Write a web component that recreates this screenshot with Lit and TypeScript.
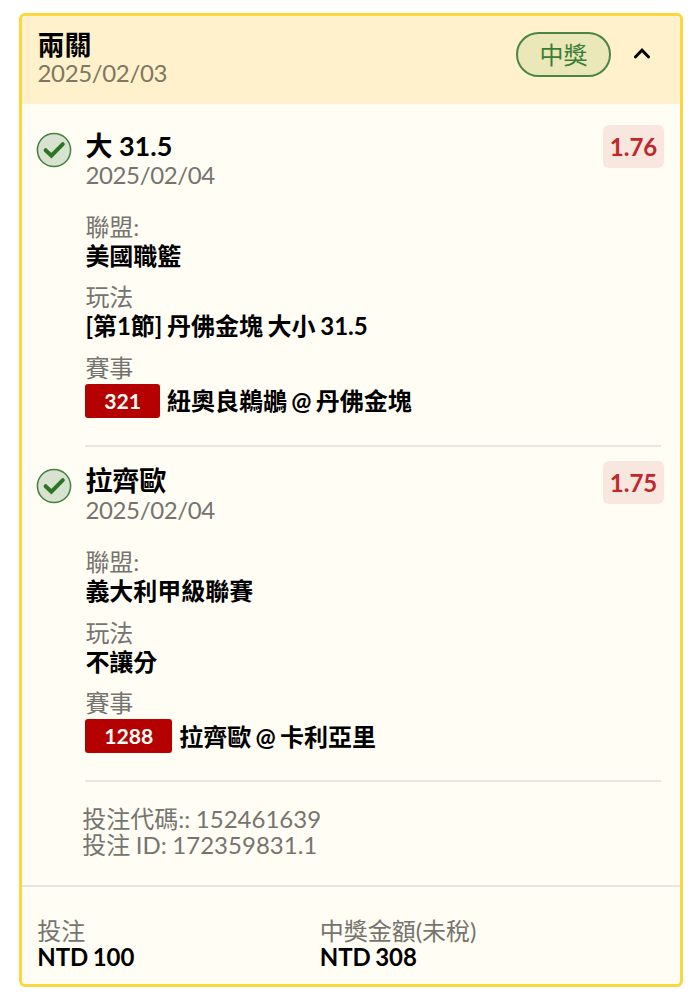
import { LitElement, html, css } from "lit";
import { customElement, property } from "lit/decorators.js";

interface Leg {
  pick: string;
  date: string;
  odds: string;
  league: string;
  market: string;
  code: string;
  match: string;
}

const LEGS: Leg[] = [
  {
    pick: "大 31.5",
    date: "2025/02/04",
    odds: "1.76",
    league: "美國職籃",
    market: "[第1節] 丹佛金塊 大小 31.5",
    code: "321",
    match: "紐奧良鵜鶘 @ 丹佛金塊",
  },
  {
    pick: "拉齊歐",
    date: "2025/02/04",
    odds: "1.75",
    league: "義大利甲級聯賽",
    market: "不讓分",
    code: "1288",
    match: "拉齊歐 @ 卡利亞里",
  },
];

@customElement("bet-leg")
class BetLeg extends LitElement {
  static styles = css`
    :host { display: block; height: 335.5px; box-sizing: border-box; padding: 14px 16px 0 14.2px; }
    .row { display: flex; height: 100%; box-sizing: border-box; }
    .icon { flex: none; width: 36px; height: 36px; margin-top: 7.2px; margin-right: 13.2px; }
    .body { flex: 1; display: flex; flex-direction: column; margin-right: 3px; border-bottom: 2px solid #e9e7e1; }
    .top { display: flex; justify-content: space-between; align-items: flex-start; height: 86.5px; }
    .head { padding-top: 6.5px; }
    .pick { font-size: 27px; line-height: 28.5px; font-weight: 700; color: #000; }
    .date, .label { font-size: 24px; line-height: 29px; color: #76746f; }
    .date { letter-spacing: -0.35px; margin-top: -0.5px; }
    .odds { width: 61px; height: 43px; margin-right: -3px; border-radius: 6px; background: #f8e6df; color: #c0272b;
      font-size: 24px; line-height: 44px; font-weight: 700; text-align: center; }
    .value { font-size: 24px; line-height: 29px; font-weight: 700; color: #000; margin-bottom: 12.5px; white-space: nowrap; word-spacing: -1.2px; }
    .match { display: flex; align-items: center; gap: 7.2px; height: 34px; margin-top: 2px; }
    .match .value { margin: 0; word-spacing: -1.6px; }
    .code { padding: 0 18.8px; border-radius: 3px; background: #b40000; color: #fffdf5; font-size: 21.2px; line-height: 34px; font-weight: 700; }
  `;
  @property({ attribute: false }) leg!: Leg;
  render() {
    const l = this.leg;
    return html`<div class="row">
      <svg class="icon" viewBox="0 0 36 36">
        <circle cx="18" cy="18" r="16.6" fill="#d7e3cf" stroke="#438043" stroke-width="1.5" />
        <path d="M9.6 18.2 L15.4 23.6 L26.8 12.2" fill="none" stroke="#2f7426" stroke-width="4" stroke-linecap="round" />
      </svg>
      <div class="body">
        <div class="top">
          <div class="head"><div class="pick">${l.pick}</div><div class="date">${l.date}</div></div>
          <div class="odds">${l.odds}</div>
        </div>
        <div class="label">聯盟:</div><div class="value">${l.league}</div>
        <div class="label">玩法</div><div class="value">${l.market}</div>
        <div class="label">賽事</div>
        <div class="match"><span class="code">${l.code}</span><span class="value">${l.match}</span></div>
      </div>
    </div>`;
  }
}

@customElement("app-root")
class AppRoot extends LitElement {
  static styles = css`
    :host { display: block; box-sizing: border-box; height: 1000px; padding: 13px 17px 13px 19px; background: #fff;
      font-family: Lato, "Noto Sans CJK TC", sans-serif; font-size: 24px; color: #76746f; }
    .card { box-sizing: border-box; height: 974px; border: 3px solid #fbd63c; border-radius: 6px; background: #fffdf4; overflow: hidden; }
    .header { display: flex; align-items: flex-start; box-sizing: border-box; height: 88px; padding: 15px 29px 0 15.5px; background: #fff1cb; }
    .titles { flex: 1; }
    .title { font-size: 27px; line-height: 28px; font-weight: 700; color: #000; }
    .date { line-height: 28px; color: #807760; letter-spacing: -0.35px; }
    .pill { box-sizing: border-box; width: 95px; height: 45px; margin-top: 1px; border: 2px solid #4b8545; border-radius: 23px; background: #eae8b9;
      color: #3c7d35; line-height: 42px; text-align: center; }
    .chev { width: 18px; height: 14px; margin: 14.5px 0 0 22px; }
    .legs { padding-top: 7px; }
    .ids { padding: 24px 0 0 60.3px; height: 105px; box-sizing: border-box; line-height: 26px; border-bottom: 2px solid #e8e6e2; word-spacing: -0.6px; }
    .foot { display: grid; grid-template-columns: 282.5px 1fr; padding: 31px 0 0 15.2px; line-height: 26px; }
    .amount { font-weight: 700; color: #000; word-spacing: -1.5px; }
  `;
  render() {
    return html`<div class="card">
      <div class="header">
        <div class="titles"><div class="title">兩關</div><div class="date">2025/02/03</div></div>
        <div class="pill">中獎</div>
        <svg class="chev" viewBox="0 0 18 14"><path d="M2.4 11 L9 4.2 L15.6 11" fill="none" stroke="#000" stroke-width="2.9" stroke-linecap="round" /></svg>
      </div>
      <div class="legs">${LEGS.map((l) => html`<bet-leg .leg=${l}></bet-leg>`)}</div>
      <div class="ids"><div>投注代碼:: 152461639</div><div>投注 ID: 172359831.1</div></div>
      <div class="foot">
        <div><div>投注</div><div class="amount">NTD 100</div></div>
        <div><div>中獎金額(未稅)</div><div class="amount">NTD 308</div></div>
      </div>
    </div>`;
  }
}
